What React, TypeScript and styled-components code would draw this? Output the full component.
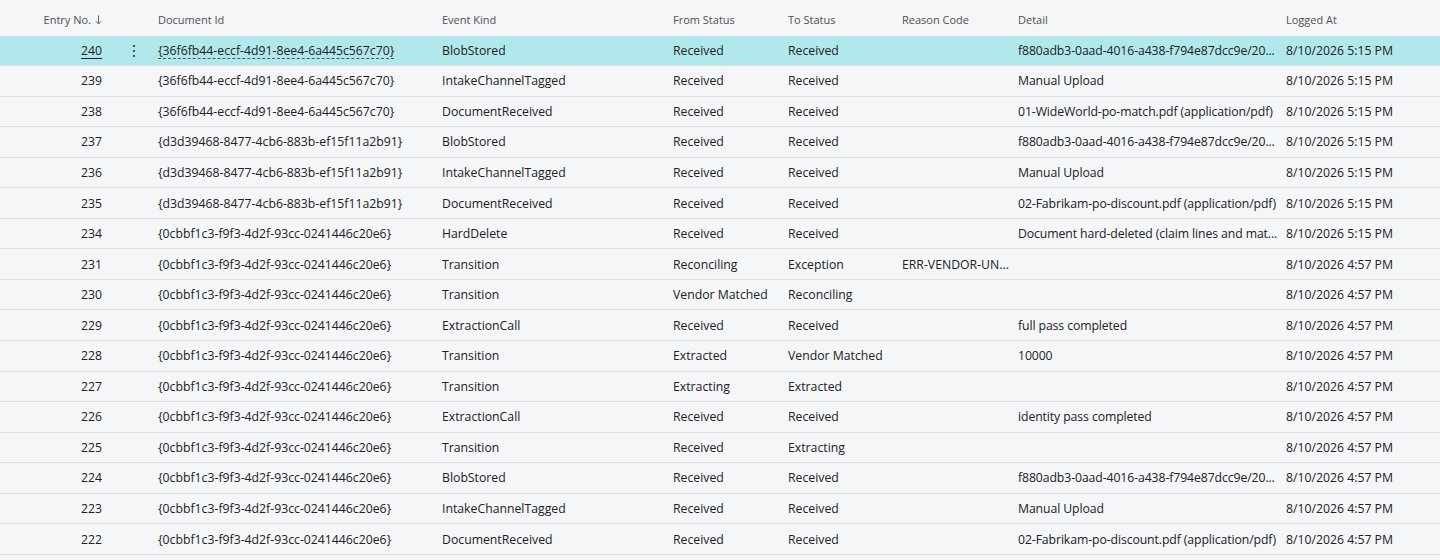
import React from "react";
import styled, { createGlobalStyle } from "styled-components";

const Global = createGlobalStyle`
  html, body { margin: 0; padding: 0; background: #f5f6f8; }
  body { font-family: "Open Sans", "Noto Sans", Arial, sans-serif; color: #212121; overflow: hidden; }
`;

const COLS = "110px 44px 284px 231px 115px 114px 116px 270px 1fr";

const Grid = styled.div`
  width: 1440px;
  display: flex;
  flex-direction: column;
`;

const HeaderRow = styled.div`
  display: grid;
  grid-template-columns: ${COLS};
  height: 35.5px;
  box-sizing: border-box;
  padding-top: 4px;
  align-items: center;
`;

const HeaderCell = styled.div<{ $right?: boolean; $tail?: boolean }>`
  font-size: 11px;
  color: #505050;
  padding: 0 ${(p) => (p.$right ? "8px" : "4px")} 0 ${(p) => (p.$tail ? "2px" : "4px")};
  white-space: nowrap;
  display: flex;
  justify-content: ${(p) => (p.$right ? "flex-end" : "flex-start")};
  align-items: center;
  gap: 4px;
`;

const Row = styled.div<{ $selected?: boolean }>`
  display: grid;
  grid-template-columns: ${COLS};
  height: 30.56px;
  box-sizing: border-box;
  border-bottom: 1px solid #dcdfe3;
  background: ${(p) => (p.$selected ? "#b1e8ec" : "transparent")};
  align-items: center;
  font-size: 12.25px;
  padding-top: 1px;
`;

const Cell = styled.div<{ $right?: boolean; $tight?: boolean; $tail?: boolean }>`
  padding: 0 ${(p) => (p.$right ? "8px" : p.$tight ? "0" : "2px")} 0 ${(p) => (p.$tail ? "2px" : "4px")};
  text-align: ${(p) => (p.$right ? "right" : "left")};
  letter-spacing: ${(p) => (p.$tight ? "-0.1px" : "normal")};
  white-space: nowrap;
  overflow: hidden;
  text-overflow: ellipsis;
  line-height: 18px;
`;

const EntryLink = styled.span<{ $selected?: boolean }>`
  text-decoration: ${(p) => (p.$selected ? "underline" : "none")};
  text-underline-offset: 3px;
`;

const DocLink = styled.span<{ $selected?: boolean }>`
  text-decoration: ${(p) => (p.$selected ? "underline dashed #555" : "none")};
  text-underline-offset: 3px;
`;

const DotsCell = styled.div`
  display: flex;
  justify-content: center;
  align-items: center;
  padding-left: 4px;
`;

const SortArrow = () => (
  <svg width="7" height="10" viewBox="0 0 7 10" fill="none" stroke="#666" strokeWidth="1">
    <path d="M3.5 0.5 V9" />
    <path d="M0.8 6.2 L3.5 9 L6.2 6.2" />
  </svg>
);

const Dots = () => (
  <svg width="4" height="14" viewBox="0 0 4 14" fill="#333">
    <circle cx="2" cy="2" r="1.1" />
    <circle cx="2" cy="7" r="1.1" />
    <circle cx="2" cy="12" r="1.1" />
  </svg>
);

type Entry = {
  no: number;
  doc: string;
  kind: string;
  from: string;
  to: string;
  reason: string;
  detail: string;
  at: string;
};

const D1 = "{36f6fb44-eccf-4d91-8ee4-6a445c567c70}";
const D2 = "{d3d39468-8477-4cb6-883b-ef15f11a2b91}";
const D3 = "{0cbbf1c3-f9f3-4d2f-93cc-0241446c20e6}";
const BLOB = "f880adb3-0aad-4016-a438-f794e87dcc9e/20...";
const T1 = "8/10/2026 5:15 PM";
const T2 = "8/10/2026 4:57 PM";

const rows: Entry[] = [
  { no: 240, doc: D1, kind: "BlobStored", from: "Received", to: "Received", reason: "", detail: BLOB, at: T1 },
  { no: 239, doc: D1, kind: "IntakeChannelTagged", from: "Received", to: "Received", reason: "", detail: "Manual Upload", at: T1 },
  { no: 238, doc: D1, kind: "DocumentReceived", from: "Received", to: "Received", reason: "", detail: "01-WideWorld-po-match.pdf (application/pdf)", at: T1 },
  { no: 237, doc: D2, kind: "BlobStored", from: "Received", to: "Received", reason: "", detail: BLOB, at: T1 },
  { no: 236, doc: D2, kind: "IntakeChannelTagged", from: "Received", to: "Received", reason: "", detail: "Manual Upload", at: T1 },
  { no: 235, doc: D2, kind: "DocumentReceived", from: "Received", to: "Received", reason: "", detail: "02-Fabrikam-po-discount.pdf (application/pdf)", at: T1 },
  { no: 234, doc: D3, kind: "HardDelete", from: "Received", to: "Received", reason: "", detail: "Document hard-deleted (claim lines and mat...", at: T1 },
  { no: 231, doc: D3, kind: "Transition", from: "Reconciling", to: "Exception", reason: "ERR-VENDOR-UN...", detail: "", at: T2 },
  { no: 230, doc: D3, kind: "Transition", from: "Vendor Matched", to: "Reconciling", reason: "", detail: "", at: T2 },
  { no: 229, doc: D3, kind: "ExtractionCall", from: "Received", to: "Received", reason: "", detail: "full pass completed", at: T2 },
  { no: 228, doc: D3, kind: "Transition", from: "Extracted", to: "Vendor Matched", reason: "", detail: "10000", at: T2 },
  { no: 227, doc: D3, kind: "Transition", from: "Extracting", to: "Extracted", reason: "", detail: "", at: T2 },
  { no: 226, doc: D3, kind: "ExtractionCall", from: "Received", to: "Received", reason: "", detail: "identity pass completed", at: T2 },
  { no: 225, doc: D3, kind: "Transition", from: "Received", to: "Extracting", reason: "", detail: "", at: T2 },
  { no: 224, doc: D3, kind: "BlobStored", from: "Received", to: "Received", reason: "", detail: BLOB, at: T2 },
  { no: 223, doc: D3, kind: "IntakeChannelTagged", from: "Received", to: "Received", reason: "", detail: "Manual Upload", at: T2 },
  { no: 222, doc: D3, kind: "DocumentReceived", from: "Received", to: "Received", reason: "", detail: "02-Fabrikam-po-discount.pdf (application/pdf)", at: T2 },
];

export default function App() {
  return (
    <>
      <Global />
      <Grid>
        <HeaderRow>
          <HeaderCell $right>
            Entry No. <SortArrow />
          </HeaderCell>
          <HeaderCell />
          <HeaderCell>Document Id</HeaderCell>
          <HeaderCell>Event Kind</HeaderCell>
          <HeaderCell>From Status</HeaderCell>
          <HeaderCell>To Status</HeaderCell>
          <HeaderCell>Reason Code</HeaderCell>
          <HeaderCell>Detail</HeaderCell>
          <HeaderCell $tail>Logged At</HeaderCell>
        </HeaderRow>
        {rows.map((r, i) => {
          const sel = i === 0;
          return (
            <Row key={r.no} $selected={sel}>
              <Cell $right>
                <EntryLink $selected={sel}>{r.no}</EntryLink>
              </Cell>
              <DotsCell>{sel ? <Dots /> : null}</DotsCell>
              <Cell>
                <DocLink $selected={sel}>{r.doc}</DocLink>
              </Cell>
              <Cell>{r.kind}</Cell>
              <Cell>{r.from}</Cell>
              <Cell>{r.to}</Cell>
              <Cell>{r.reason}</Cell>
              <Cell $tight>{r.detail}</Cell>
              <Cell $tail>{r.at}</Cell>
            </Row>
          );
        })}
      </Grid>
    </>
  );
}
